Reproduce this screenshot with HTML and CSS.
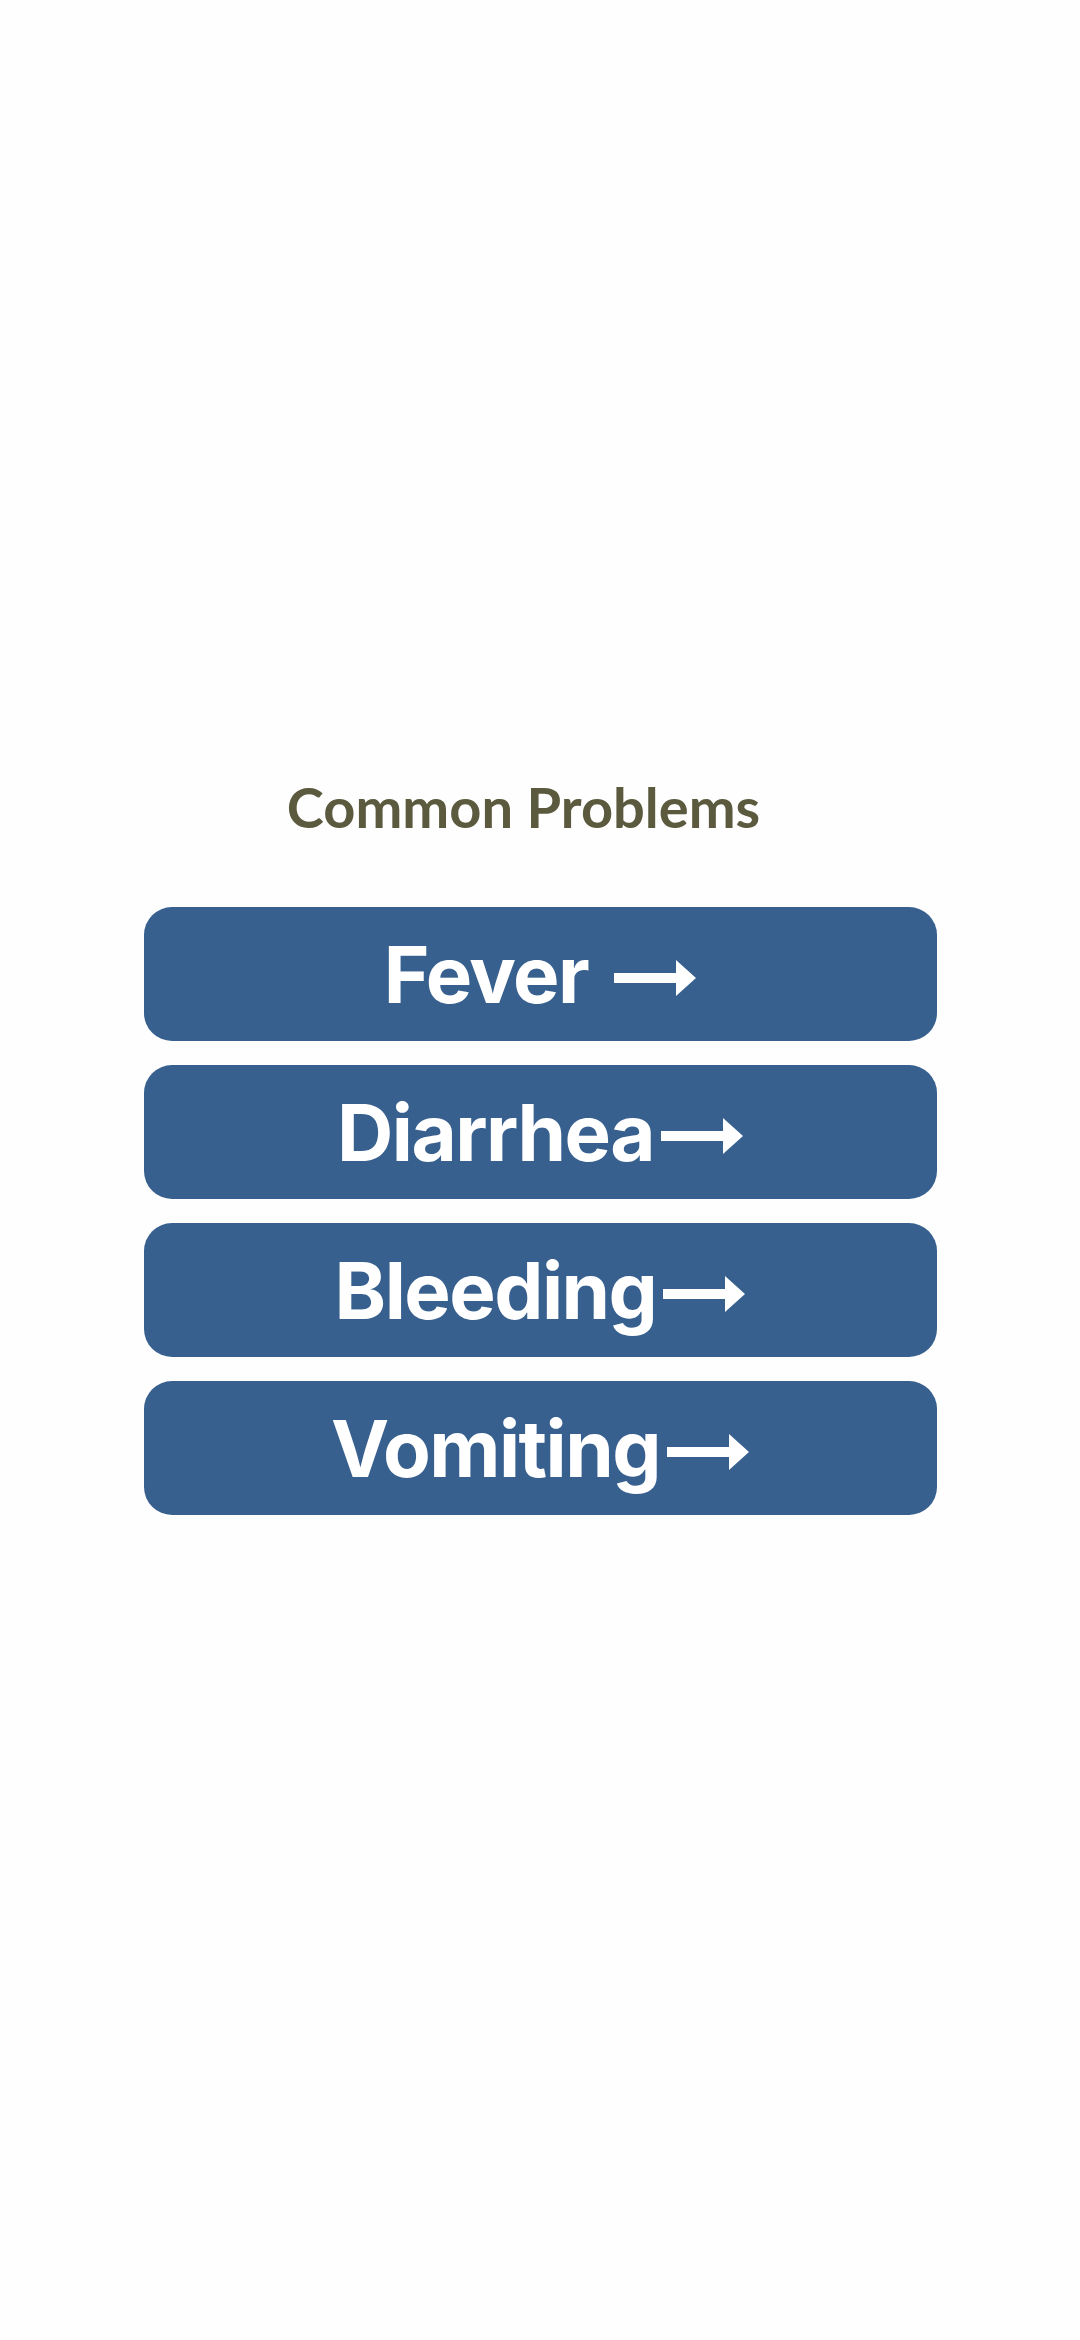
FILE: index.html
```html
<!DOCTYPE html>
<html lang="en">

<head>
  <meta charset="UTF-8">
  <meta name="viewport" content="width=device-width, initial-scale=1.0">
  <title>Common Problems</title>

  <link rel="stylesheet" href="styles.css">
</head>

<body>
  <main class="screen">
    <h1 class="title">Common Problems</h1>

    <section class="problem-list">
      <button class="problem">Fever<svg class="arrow spaced" viewBox="0 0 82 36"><path d="M0 13h62V0l20 18-20 18V23H0z" /></svg></button>
      <button class="problem">Diarrhea<svg class="arrow" viewBox="0 0 82 36"><path d="M0 13h62V0l20 18-20 18V23H0z" /></svg></button>
      <button class="problem">Bleeding<svg class="arrow" viewBox="0 0 82 36"><path d="M0 13h62V0l20 18-20 18V23H0z" /></svg></button>
      <button class="problem">Vomiting<svg class="arrow" viewBox="0 0 82 36"><path d="M0 13h62V0l20 18-20 18V23H0z" /></svg></button>
    </section>
  </main>
</body>

</html>
```

FILE: styles.css
```css
body {
  background: #fefefe;
  margin: 0;
}

.screen {
  box-sizing: border-box;
  display: flex;
  flex-direction: column;
  align-items: center;
  height: 2340px;
  padding-top: 773px;
}

.title {
  color: #5b5a3f;
  font-family: Lato, "Liberation Sans", sans-serif;
  font-size: 56px;
  font-weight: 700;
  line-height: 1.2;
  margin: 0 33px 67px 0;
}

.problem-list {
  display: flex;
  flex-direction: column;
  row-gap: 24px;
  width: 793px;
}

.problem {
  align-items: center;
  background: #37608f;
  border: none;
  border-radius: 28px;
  color: #fff;
  display: flex;
  font-family: Inter, "Liberation Sans", sans-serif;
  font-size: 78px;
  font-variant-ligatures: none;
  font-weight: 700;
  height: 134px;
  justify-content: center;
  letter-spacing: -1.5px;
  padding: 0;
}

.arrow {
  fill: #fff;
  height: 36px;
  margin-left: 7px;
  margin-top: 8px;
  width: 82px;
}

.arrow.spaced {
  margin-left: 26px;
}
```
